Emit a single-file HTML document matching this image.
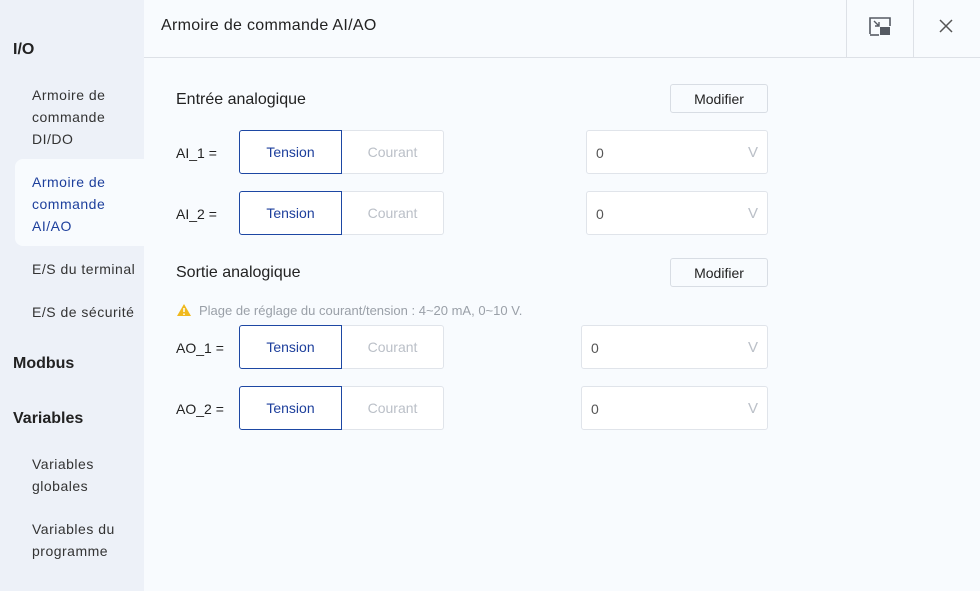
<!DOCTYPE html><html><head><style>
*{margin:0;padding:0;box-sizing:border-box}
body{width:980px;height:591px;background:#f8fbfe;font-family:"Liberation Sans",sans-serif;color:#222;position:relative;overflow:hidden}
.a{position:absolute}
#side{left:0;top:0;width:144px;height:591px;background:#edf1f8}
.h{font-size:16px;font-weight:bold;color:#222;left:13px}
.it{left:32px;font-size:14px;line-height:22px;color:#333;letter-spacing:0.5px}
.seg{position:absolute;height:44px;width:205px;display:flex}
.seg div{flex:1;display:flex;align-items:center;justify-content:center;font-size:14px;background:#fff}
.seg .t{border:1px solid #1d47a3;border-radius:3px 0 0 3px;color:#1d3f9c}
.seg .c{border:1px solid #e0e4ea;border-left:none;border-radius:0 3px 3px 0;color:#bbc0c8}
.inp{position:absolute;height:44px;background:#fff;border:1px solid #e0e4ea;border-radius:3px;font-size:14px}
.inp span{position:absolute;left:9px;top:14px;color:#555}
.inp b{position:absolute;right:9px;top:13px;font-weight:normal;color:#bbc0c8;font-size:15px}
.btn{position:absolute;left:670px;width:98px;height:29px;border:1px solid #d8dde4;border-radius:3px;background:#f8fbfe;font-size:14px;display:flex;align-items:center;justify-content:center;color:#222}
.lab{position:absolute;font-size:14px;color:#222}
.sec{position:absolute;left:176px;font-size:16px;color:#222}
</style></head><body>
<div class="a" id="side"></div>
<div class="a" style="left:15px;top:159px;width:140px;height:87px;background:#f8fbfe;border-radius:8px"></div>
<div class="a h" style="top:41px">I/O</div>
<div class="a it" style="top:84px">Armoire de<br>commande<br>DI/DO</div>
<div class="a it" style="top:171px;color:#1d3f9c">Armoire de<br>commande<br>AI/AO</div>
<div class="a it" style="top:258px;white-space:nowrap">E/S du terminal</div>
<div class="a it" style="top:301px;white-space:nowrap">E/S de sécurité</div>
<div class="a h" style="top:355px">Modbus</div>
<div class="a h" style="top:410px">Variables</div>
<div class="a it" style="top:453px">Variables<br>globales</div>
<div class="a it" style="top:518px">Variables du<br>programme</div>

<div class="a" style="left:144px;top:57px;width:836px;height:1px;background:#dde1e7"></div>
<div class="a" style="left:846px;top:0;width:1px;height:57px;background:#dde1e7"></div>
<div class="a" style="left:913px;top:0;width:1px;height:57px;background:#dde1e7"></div>
<div class="a" style="left:161px;top:17px;font-size:16px;letter-spacing:0.3px">Armoire de commande AI/AO</div>
<svg class="a" style="left:868px;top:16px" width="24" height="22" viewBox="0 0 24 22"><path d="M2 18V2h20v8" fill="none" stroke="#555a63" stroke-width="1.6"/><path d="M2 19h9" stroke="#555a63" stroke-width="1.6"/><rect x="12" y="11" width="10" height="8" fill="#555a63"/><path d="M6 5l5 5M7 10h4V6" fill="none" stroke="#555a63" stroke-width="1.4"/></svg>
<svg class="a" style="left:939px;top:19px" width="14" height="14"><path d="M1 1l12 12M13 1L1 13" stroke="#555" stroke-width="1.5"/></svg>

<div class="sec" style="top:91px">Entrée analogique</div>
<div class="btn" style="top:84px">Modifier</div>
<div class="lab" style="left:176px;top:145px">AI_1 =</div>
<div class="seg" style="left:239px;top:130px"><div class="t">Tension</div><div class="c">Courant</div></div>
<div class="inp" style="left:586px;top:130px;width:182px"><span>0</span><b>V</b></div>
<div class="lab" style="left:176px;top:206px">AI_2 =</div>
<div class="seg" style="left:239px;top:191px"><div class="t">Tension</div><div class="c">Courant</div></div>
<div class="inp" style="left:586px;top:191px;width:182px"><span>0</span><b>V</b></div>

<div class="sec" style="top:264px">Sortie analogique</div>
<div class="btn" style="top:258px">Modifier</div>
<svg class="a" style="left:176px;top:303px" width="16" height="14"><path d="M8 1L15 13H1z" fill="#f0b91e"/><path d="M8 5v4M8 10.5v1.5" stroke="#fff" stroke-width="1.5"/></svg>
<div class="a" style="left:199px;top:303px;font-size:13px;color:#9aa0a8">Plage de réglage du courant/tension : 4~20 mA, 0~10 V.</div>
<div class="lab" style="left:176px;top:340px">AO_1 =</div>
<div class="seg" style="left:239px;top:325px"><div class="t">Tension</div><div class="c">Courant</div></div>
<div class="inp" style="left:581px;top:325px;width:187px"><span>0</span><b>V</b></div>
<div class="lab" style="left:176px;top:401px">AO_2 =</div>
<div class="seg" style="left:239px;top:386px"><div class="t">Tension</div><div class="c">Courant</div></div>
<div class="inp" style="left:581px;top:386px;width:187px"><span>0</span><b>V</b></div>
</body></html>
